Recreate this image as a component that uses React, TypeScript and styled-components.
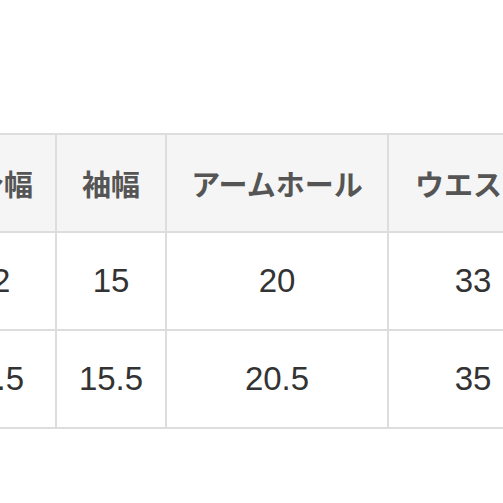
import styled, { createGlobalStyle } from "styled-components";

const GlobalStyle = createGlobalStyle`
  html, body {
    margin: 0;
    padding: 0;
    background: #ffffff;
  }
`;

const Page = styled.div`
  width: 503px;
  height: 503px;
  overflow: hidden;
  padding-top: 133px;
  box-sizing: border-box;
  background: #fff;
`;

const Table = styled.table`
  margin-left: -47px;
  table-layout: fixed;
  width: 726px;
  border-collapse: separate;
  border-spacing: 0;
  border-top: 2px solid #dddddd;
`;

const Th = styled.th`
  height: 96px;
  padding: 0;
  background: #f5f5f5;
  color: #555555;
  font-family: "Noto Sans CJK JP", "Noto Sans", sans-serif;
  font-weight: 700;
  font-size: 29px;
  text-align: center;
  white-space: nowrap;
  border-right: 2px solid #dddddd;
  border-bottom: 2px solid #dddddd;
`;

const Td = styled.td`
  height: 96px;
  padding: 0;
  background: #fff;
  color: #333333;
  font-family: "Liberation Sans", Arial, sans-serif;
  font-size: 33px;
  text-align: center;
  white-space: nowrap;
  border-right: 2px solid #dddddd;
  border-bottom: 2px solid #dddddd;

  &:first-child {
    padding-right: 24px;
  }
`;

const widths = [104, 110, 222, 170, 120];
const headers = ["身幅", "袖幅", "アームホール", "ウエスト", "ヒップ"];
const rows = [
  ["42", "15", "20", "33", "44"],
  ["43.5", "15.5", "20.5", "35", "46"],
];

export default function App() {
  return (
    <>
      <GlobalStyle />
      <Page>
        <Table>
          <colgroup>
            {widths.map((w, i) => (
              <col key={i} style={{ width: w }} />
            ))}
          </colgroup>
          <thead>
            <tr>
              {headers.map((h) => (
                <Th key={h}>{h}</Th>
              ))}
            </tr>
          </thead>
          <tbody>
            {rows.map((r, i) => (
              <tr key={i}>
                {r.map((v, j) => (
                  <Td key={j}>{v}</Td>
                ))}
              </tr>
            ))}
          </tbody>
        </Table>
      </Page>
    </>
  );
}
